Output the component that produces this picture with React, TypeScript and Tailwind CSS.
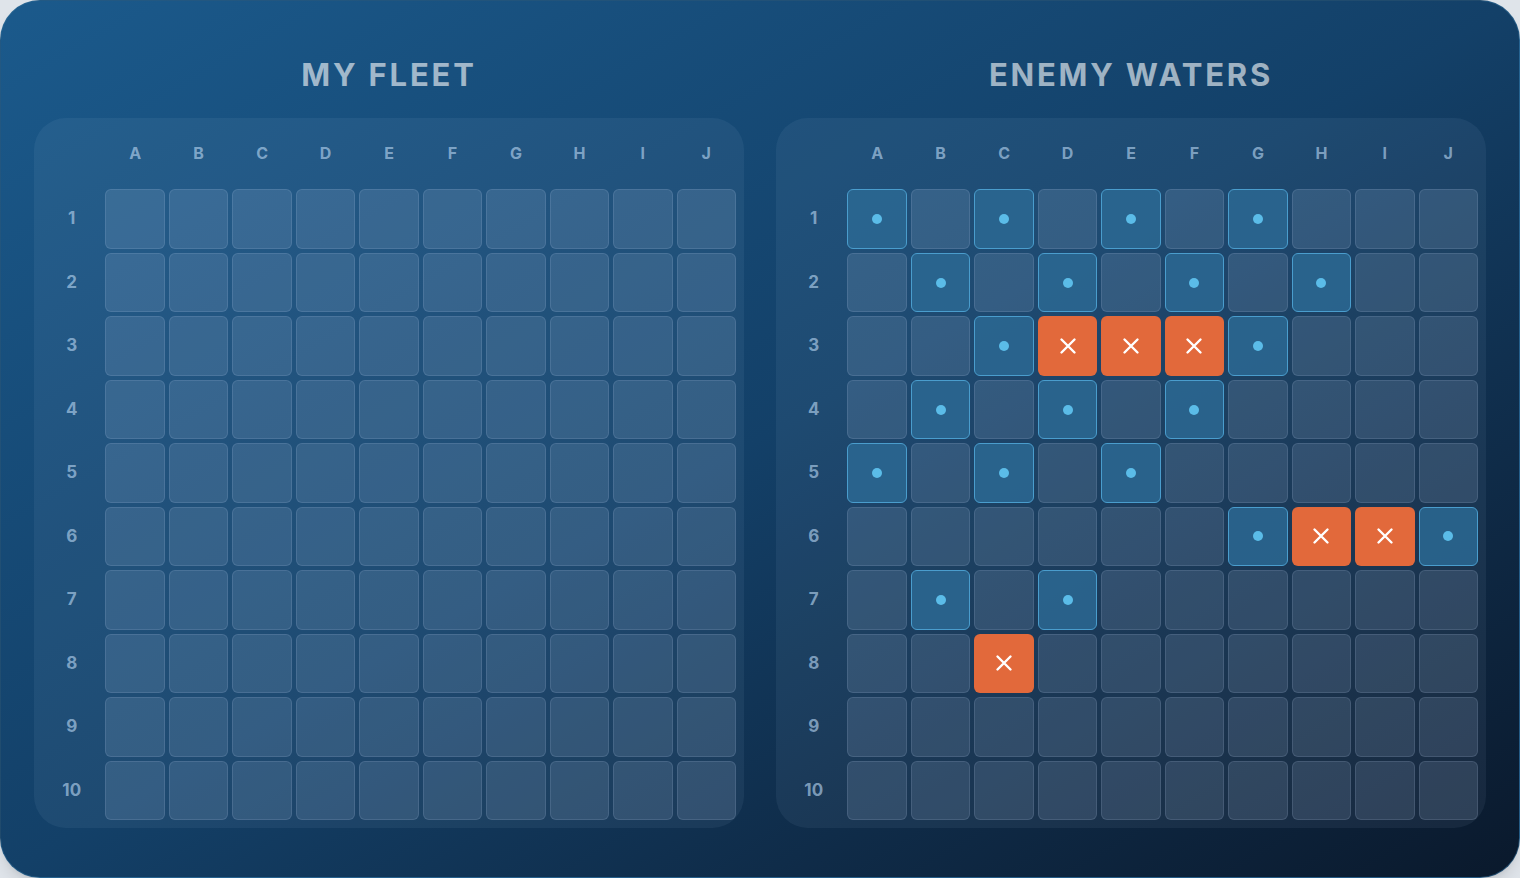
import React from "react";

const COLS = ["A", "B", "C", "D", "E", "F", "G", "H", "I", "J"];
const ROWS = [1, 2, 3, 4, 5, 6, 7, 8, 9, 10];

type Shot = "miss" | "hit";

// Shots fired into enemy waters, keyed by "<col><row>"
const SHOTS: Record<string, Shot> = {
  A1: "miss", C1: "miss", E1: "miss", G1: "miss",
  B2: "miss", D2: "miss", F2: "miss", H2: "miss",
  C3: "miss", D3: "hit", E3: "hit", F3: "hit", G3: "miss",
  B4: "miss", D4: "miss", F4: "miss",
  A5: "miss", C5: "miss", E5: "miss",
  G6: "miss", H6: "hit", I6: "hit", J6: "miss",
  B7: "miss", D7: "miss",
  C8: "hit",
};

function Cross() {
  return (
    <svg width="20" height="20" viewBox="0 0 20 20" fill="none">
      <path d="M3.5 3.5 L16.5 16.5 M16.5 3.5 L3.5 16.5" stroke="white" strokeWidth="2.4" strokeLinecap="round" />
    </svg>
  );
}

function Cell({ shot }: { shot?: Shot }) {
  if (shot === "hit") {
    return (
      <div className="flex items-center justify-center rounded-[6px] bg-[#e2693b]">
        <Cross />
      </div>
    );
  }
  if (shot === "miss") {
    return (
      <div className="flex items-center justify-center rounded-[6px] bg-[#2b6993]/85 border-[1.5px] border-[#4a9dcd]">
        <div className="w-[10px] h-[10px] rounded-full bg-[#5bbce8]" />
      </div>
    );
  }
  return <div className="rounded-[6px] bg-[#bcd8f2]/[0.14] border-[1.5px] border-[#bcd8f2]/[0.14]" />;
}

function Board({ title, shots }: { title: string; shots?: Record<string, Shot> }) {
  return (
    <div className="flex flex-col flex-1">
      <h2 className="h-[83px] pt-[17px] text-center text-[31px] font-bold tracking-[0.09em] text-white/60 leading-[46px]">
        {title}
      </h2>
      <div className="aspect-square rounded-[32px] bg-[#bcd8f2]/[0.07] p-[8px] grid grid-cols-11 grid-rows-11 gap-[4px]">
        <div />
        {COLS.map((c) => (
          <div key={c} className="flex items-center justify-center pb-[6px] text-[16px] font-bold text-[#b4d2ee]/65">
            {c}
          </div>
        ))}
        {ROWS.map((r) => (
          <React.Fragment key={r}>
            <div className="flex items-center justify-center text-[17px] font-bold text-[#b4d2ee]/65">{r}</div>
            {COLS.map((c) => (
              <Cell key={c + r} shot={shots ? shots[c + r] : undefined} />
            ))}
          </React.Fragment>
        ))}
      </div>
    </div>
  );
}

export default function App() {
  return (
    <div
      className="w-[1520px] h-[878px] bg-[#dfe4ea]"
      style={{ fontFamily: "Inter, 'Open Sans', 'Liberation Sans', sans-serif" }}
    >
      <div className="h-full rounded-[40px] border border-[#2f6a96]/60 bg-gradient-to-br from-[#1b5a8c] via-[#134068] to-[#0a192c] px-[33px] pt-[34px] flex gap-[32px] shadow-lg">
        <Board title="MY FLEET" />
        <Board title="ENEMY WATERS" shots={SHOTS} />
      </div>
    </div>
  );
}
